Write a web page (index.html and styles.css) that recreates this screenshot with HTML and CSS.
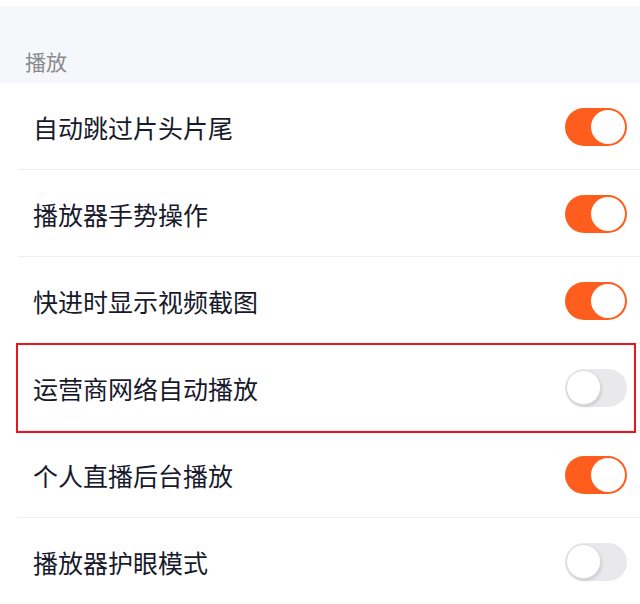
FILE: index.html
```html
<!DOCTYPE html>
<html lang="zh">
<head>
<meta charset="utf-8">
<link rel="stylesheet" href="styles.css">
</head>
<body>
<div class="page">
  <div class="section-head"><span>播放</span></div>
  <div class="list">
    <div class="row"><span class="label">自动跳过片头片尾</span><span class="switch on"><span class="knob"></span></span></div>
    <div class="row"><span class="label">播放器手势操作</span><span class="switch on"><span class="knob"></span></span></div>
    <div class="row"><span class="label">快进时显示视频截图</span><span class="switch on"><span class="knob"></span></span></div>
    <div class="row highlight"><span class="label">运营商网络自动播放</span><span class="switch off"><span class="knob"></span></span></div>
    <div class="row"><span class="label">个人直播后台播放</span><span class="switch on"><span class="knob"></span></span></div>
    <div class="row last"><span class="label">播放器护眼模式</span><span class="switch off"><span class="knob"></span></span></div>
  </div>
</div>
</body>
</html>
```

FILE: styles.css
```css
html, body {
  margin: 0;
  padding: 0;
  background: #ffffff;
}
body {
  width: 640px;
  height: 604px;
  overflow: hidden;
  font-family: "Noto Sans CJK SC", "Noto Sans", sans-serif;
}
.page {
  padding-top: 6px;
}
.section-head {
  height: 77px;
  background: #f5f7fa;
  display: flex;
  align-items: flex-end;
  padding-left: 25px;
  box-sizing: border-box;
  padding-bottom: 7px;
}
.section-head span {
  font-size: 21px;
  line-height: 30px;
  color: #8a8a8e;
}
.list {
  display: flex;
  flex-direction: column;
}
.row {
  position: relative;
  height: 87px;
  display: flex;
  align-items: center;
  justify-content: space-between;
  padding-left: 33px;
  padding-right: 13px;
  box-sizing: border-box;
}
.row::after {
  content: "";
  position: absolute;
  left: 18px;
  right: 0;
  bottom: 0;
  height: 1px;
  background: #efeff1;
}
.row.last::after {
  display: none;
}
.label {
  font-size: 25px;
  line-height: 34px;
  color: #181a2c;
}
.switch {
  position: relative;
  width: 62px;
  height: 38px;
  border-radius: 19px;
  box-sizing: border-box;
}
.switch.on {
  background: #ff5d1d;
}
.switch.off {
  background: #e9e9ec;
}
.knob {
  position: absolute;
  top: 2px;
  width: 34px;
  height: 34px;
  border-radius: 50%;
  background: #ffffff;
}
.switch.on .knob {
  right: 2px;
}
.switch.off .knob {
  left: 1px;
  top: 1px;
  width: 35px;
  height: 35px;
  box-sizing: border-box;
  border: 1px solid #dcdcdf;
  box-shadow: 1px 2px 3px rgba(0, 0, 0, 0.12);
}
.row.highlight::before {
  content: "";
  position: absolute;
  left: 16px;
  right: 4px;
  top: -1px;
  bottom: -2px;
  border: 2px solid #e8161e;
  pointer-events: none;
  z-index: 2;
}
```
